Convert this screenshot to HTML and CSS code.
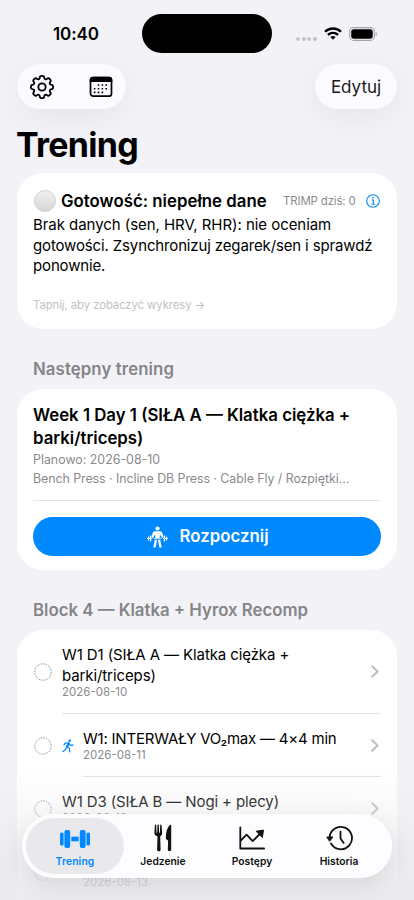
FILE: index.html
```html
<!DOCTYPE html>
<html lang="pl">
<head>
<meta charset="utf-8">
<meta name="viewport" content="width=device-width, initial-scale=1">
<title>Trening</title>
<link rel="stylesheet" href="styles.css">
</head>
<body>
<div class="screen">
  <header class="status">
    <span class="clock">10:40</span>
    <span class="island"></span>
    <span class="indicators">
      <span class="dots"><i></i><i></i><i></i><i></i></span>
      <svg class="wifi" width="18" height="13" viewBox="0 0 18 13" fill="none" stroke="#000" stroke-width="2.3"><path d="M1 4.8a11.3 11.3 0 0 1 16 0"/><path d="M3.9 7.9a7.2 7.2 0 0 1 10.2 0"/><path d="M9 12.8 6.4 10.1a3.8 3.8 0 0 1 5.2 0z" fill="#000" stroke="none"/></svg>
      <svg class="battery" width="28" height="14" viewBox="0 0 28 14"><rect x=".6" y=".6" width="24.8" height="12.8" rx="4.2" fill="none" stroke="#a5a5a8" stroke-width="1.1"/><rect x="2.2" y="2.2" width="21.6" height="9.6" rx="2.8"/><path d="M26.7 4.8c1.5.6 1.5 3.8 0 4.4z" fill="#a5a5a8"/></svg>
    </span>
  </header>

  <nav class="toolbar">
    <div class="pill tools">
      <svg width="26" height="26" viewBox="-13 -13 26 26" fill="none" stroke="#000" stroke-width="1.9" stroke-linecap="round">
        <defs><path id="teeth" d="M-3.38-8.15Q-2.23-8.62-2.24-10.1Q-2.25-11.58 0-11.58Q2.25-11.58 2.24-10.1Q2.23-8.62 3.38-8.15Q4.52-7.67 5.56-8.73Q6.6-9.78 8.19-8.19Q9.78-6.6 8.73-5.56Q7.67-4.52 8.15-3.38"/></defs>
        <g transform="scale(.96)"><use href="#teeth"/><use href="#teeth" transform="rotate(90)"/><use href="#teeth" transform="rotate(180)"/><use href="#teeth" transform="rotate(270)"/><circle r="3.8"/></g>
      </svg>
      <svg width="24" height="22" viewBox="0 0 24 22"><rect x="1.5" y="1.5" width="21" height="18.700" rx="2.800" fill="none" stroke="#000" stroke-width="1.700"/><path d="M.7 6V3.900A3.200 3.200 0 0 1 3.900.7h16.200a3.200 3.200 0 0 1 3.200 3.200V6z"/><g stroke="#000" stroke-width="1.600" stroke-dasharray="1.600 2.250"><path d="M8.700 9h9.800M4.850 12.700h13.600M4.850 16.400h9.500"/></g></svg>
    </div>
    <div class="pill edit"><span>Edytuj</span></div>
  </nav>

  <h1>Trening</h1>

  <main>
    <section class="card ready">
      <div class="ready-head">
        <span class="orb"></span>
        <h2>Gotowość: niepełne dane</h2>
        <span class="trimp">TRIMP dziś: 0</span>
        <svg width="14" height="14" viewBox="0 0 14 14" fill="none" stroke="#0088ff"><circle cx="7" cy="7" r="6.300" stroke-width="1.100"/><path d="M5.600 6h1.700v4M5.400 10.200h3.500" stroke-width="1.100"/><circle cx="7" cy="3.800" r=".9" fill="#0088ff" stroke="none"/></svg>
      </div>
      <p class="body-text"><span class="l1">Brak danych (sen, HRV, RHR): nie oceniam</span><br><span class="l2">gotowości. Zsynchronizuj zegarek/sen i sprawdź</span><br><span class="l3">ponownie.</span></p>
      <p class="hint">Tapnij, aby zobaczyć wykresy →</p>
    </section>

    <h3 class="next-label">Następny trening</h3>
    <section class="card next">
      <h2>Week 1 Day 1 (SIŁA A — Klatka ciężka +<br>barki/triceps)</h2>
      <p class="planned">Planowo: 2026-08-10</p>
      <p class="exercises">Bench Press · Incline DB Press · Cable Fly / Rozpiętki…</p>
      <hr>
      <div class="start">
        <svg width="21" height="22" viewBox="0 0 21 22" fill="#fff"><circle cx="10.500" cy="2.500" r="2.100"/><path d="M8 5.300h5c1.300 0 2 .7 2.400 1.900l1.200 4-1.500.7-2.100-3.300-.3 3.500H8.300L8 8.600l-2.100 3.300-1.500-.7 1.200-4C6 6 6.700 5.300 8 5.300z"/><path d="M7.800 13.700h2.300L8.600 21.500H6.300zM10.900 13.700h2.300l1.500 7.800h-2.300z"/><path d="M0 12h4.800v1H0zM16.200 12H21v1h-4.800zM6.500 12.200h8v.7h-8z"/><path d="M1 10.500h1.100v4H1zM2.900 9.500h1.300v6H2.900zM16.800 9.500h1.300v6h-1.300zM18.900 10.500H20v4h-1.100z"/></svg>
        <span>Rozpocznij</span>
      </div>
    </section>

    <h3 class="block-label">Block 4 — Klatka + Hyrox Recomp</h3>
    <section class="card list">
      <article class="row tall">
        <svg class="ring" width="18" height="18" viewBox="0 0 18 18"><circle cx="9" cy="9" r="8.200"/></svg>
        <div class="cell"><div class="text"><p class="title r1">W1 D1 (SIŁA A — Klatka ciężka +<br>barki/triceps)</p><p class="date">2026-08-10</p></div>
        <svg class="chev" width="8" height="13" viewBox="0 0 8 13"><path d="M1.200 1.200 6.600 6.500 1.200 11.800"/></svg></div>
      </article>
      <article class="row">
        <svg class="ring" width="18" height="18" viewBox="0 0 18 18"><circle cx="9" cy="9" r="8.200"/></svg>
        <svg class="runner" width="12" height="14" viewBox="0 0 12 14" fill="none" stroke="#0088ff" stroke-linecap="round" stroke-linejoin="round"><circle cx="7.700" cy="1.700" r="1.300" fill="#0088ff" stroke="none"/><path d="M6.600 4.300 4.900 8" stroke-width="2.300"/><path d="M6 4 3.200 4.100 1.900 6.200M7.200 4.700l1.300 1.700 2.500-.3M5.500 7.900l2 1.700.2 3.200M4.400 8.500 3.500 10.700.8 12.500" stroke-width="1.200"/></svg>
        <div class="cell"><div class="text"><p class="title r2">W1: INTERWAŁY VO₂max — 4×4 min</p><p class="date">2026-08-11</p></div>
        <svg class="chev" width="8" height="13" viewBox="0 0 8 13"><path d="M1.200 1.200 6.600 6.500 1.200 11.800"/></svg></div>
      </article>
      <article class="row">
        <svg class="ring" width="18" height="18" viewBox="0 0 18 18"><circle cx="9" cy="9" r="8.200"/></svg>
        <div class="cell"><div class="text"><p class="title r3">W1 D3 (SIŁA B — Nogi + plecy)</p><p class="date">2026-08-12</p></div>
        <svg class="chev" width="8" height="13" viewBox="0 0 8 13"><path d="M1.200 1.200 6.600 6.500 1.200 11.800"/></svg></div>
      </article>
      <article class="row last">
        <svg class="ring" width="18" height="18" viewBox="0 0 18 18"><circle cx="9" cy="9" r="8.200"/></svg>
        <div class="cell"><div class="text"><p class="date">2026-08-13</p></div></div>
      </article>
    </section>
  </main>

  <div class="fade"></div>
  <nav class="tabs">
    <div class="tab active">
      <svg width="32" height="20" viewBox="0 0 32 20" fill="#0088ff"><rect x="1" y="3.500" width="3.600" height="13" rx="1.500"/><rect x="5.400" y="1" width="5.800" height="18" rx="2"/><rect x="12.300" y="7.700" width="7.400" height="4.600"/><rect x="20.800" y="1" width="5.800" height="18" rx="2"/><rect x="27.400" y="3.500" width="3.600" height="13" rx="1.500"/></svg>
      <span>Trening</span>
    </div>
    <div class="tab food">
      <svg width="18" height="28" viewBox="0 0 18 28" fill="#111"><path d="M.9 1.200c0-.8 1.300-.8 1.300 0l.3 7.200c0 .5.700.5.700 0l.3-7.400c0-.8 1.400-.8 1.400 0l.2 7.400c0 .5.800.5.800 0l.3-7.200c0-.8 1.300-.8 1.400 0l.5 7.600c.1 1.900-.7 2.800-1.900 3.500l.4 13.400c0 2-3.500 2-3.500 0l.4-13.400C1.200 11.600.3 10.700.4 8.800z"/><path d="M17.200 1.600v24.200c0 1.900-3.400 1.900-3.400 0l.3-8.600c0-.6-.3-.9-.8-1.200-1.100-.6-1.600-1.300-1.500-2.600.2-5 1.100-9.200 3.700-12.100.7-.7 1.700-.6 1.700.3z"/></svg>
      <span>Jedzenie</span>
    </div>
    <div class="tab progress">
      <svg width="26" height="24" viewBox="0 0 26 24" fill="none" stroke="#111" stroke-width="1.800" stroke-linecap="round" stroke-linejoin="round"><path d="M1.300 1.500v21h23.900"/><path d="m1.800 14.500 5.800-5.800 6.100 6.500 8-8.200"/><path d="m17.500 5.200 7-1.100-1.100 7.100z" fill="#111" stroke-width="1"/></svg>
      <span>Postępy</span>
    </div>
    <div class="tab">
      <svg width="27" height="25" viewBox="0 0 27 25" fill="none" stroke="#111" stroke-width="1.800" stroke-linecap="round" stroke-linejoin="round"><path d="M3.600 12.500A11.200 11.200 0 1 1 5 18"/><path d="M14.500 6.200v6.700l3.200 4.500"/><path d="M1.100 11.500h5.800L3.800 15.500z" fill="#111" stroke-width="1"/></svg>
      <span>Historia</span>
    </div>
  </nav>
</div>
</body>
</html>
```
FILE: styles.css
```css
* { box-sizing: border-box; }
body { margin: 0; background: #f2f2f7; color: #000; font-family: Inter, "Liberation Sans", sans-serif; }
h1, h2, h3, p, hr { margin: 0; }
svg { display: block; flex: none; }
span { white-space: nowrap; }
.screen { position: relative; width: 414px; height: 900px; overflow: hidden; background: #f2f2f7; }

.status { display: flex; height: 64px; padding: 14px 0 0 53px; align-items: flex-start; }
.clock { width: 89px; font-size: 17px; font-weight: 600; line-height: 40px; letter-spacing: -.1px; }
.island { width: 130px; height: 39px; border-radius: 20px; background: #000; }
.indicators { display: flex; padding: 13px 0 0 24px; align-items: flex-start; }
.dots { display: flex; gap: 1.700px; padding-top: 9.500px; }
.dots i { width: 4px; height: 4px; border-radius: 50%; background: #c3c3c8; }
.wifi { margin-left: 6.500px; }
.battery { margin-left: 7.500px; }

.toolbar { display: flex; justify-content: space-between; padding: 0 17px; }
.pill { display: flex; align-items: center; height: 45px; border-radius: 23px; background: #fafaff; box-shadow: 0 8px 32px rgba(0, 0, 0, .06); }
.tools { width: 109px; padding: 1px 13px 0 12px; justify-content: space-between; }
.edit { width: 82px; justify-content: center; font-size: 17px; color: #1a1a1a; }
h1 { padding-left: 16px; height: 64px; font-size: 34px; font-weight: 700; line-height: 72px; letter-spacing: -.730px; }

main { padding: 0 17px; }
.card { border-radius: 26px; background: #fff; padding: 0 16px; }
h2 { font-weight: 600; white-space: nowrap; }
.ready { height: 156px; padding-top: 16px; }
.ready-head { display: flex; align-items: center; height: 24px; }
.orb { width: 22px; height: 22px; margin-left: .5px; border-radius: 50%; border: 1px solid #d0d0d0; background: linear-gradient(#f0f0f0, #d6d6d6); }
.ready h2 { margin-left: 5.500px; width: 222px; font-size: 16.800px; letter-spacing: .020px; }
.trimp { width: 83px; font-size: 11.400px; letter-spacing: -.120px; color: #8a8a8e; }
.body-text { font-size: 15px; line-height: 20.700px; white-space: nowrap; margin-top: 2px; }
.l1 { letter-spacing: -.050px; }
.l2 { letter-spacing: -.140px; }
.l3 { letter-spacing: -.150px; }
.hint { margin-top: 20px; font-size: 11.300px; line-height: 16px; letter-spacing: -.060px; color: #c1c1c4; }
h3 { padding-left: 16px; font-size: 16.800px; font-weight: 600; color: #858589; height: 60px; line-height: 80px; white-space: nowrap; }
.next-label { letter-spacing: .100px; }
.next { height: 181px; padding-top: 15px; }
.next h2 { font-size: 16.800px; line-height: 23px; }
.planned, .exercises { font-size: 12.400px; line-height: 19px; color: #8a8a8e; white-space: nowrap; }
.exercises { letter-spacing: -.060px; }
hr { height: 1px; border: 0; background: #e4e4e6; margin-top: 12px; }
.start { display: flex; align-items: center; justify-content: center; gap: 11px; height: 39px; margin-top: 16px; padding-left: 2px; border-radius: 20px; background: #08f; color: #fff; font-size: 16.800px; font-weight: 600; }
.start span { letter-spacing: .030px; line-height: 38px; padding-bottom: 1px; }
.list { height: 300px; border-radius: 26px 26px 0 0; }
.row { display: flex; align-items: center; height: 63px; }
.row.tall { height: 84px; }
.ring { margin-left: 1px; fill: none; stroke: #77777b; stroke-width: 1; stroke-dasharray: 1.200 1.376; }
.runner { margin-left: 10px; }
.cell { display: flex; align-items: center; flex: 1; height: 100%; margin-left: 10px; border-bottom: 1px solid #e4e4e6; }
.runner + .cell { margin-left: 9px; }
.text { flex: 1; }
.title { font-size: 15px; line-height: 20.500px; white-space: nowrap; }
.r1 { letter-spacing: -.100px; }
.r2 { letter-spacing: -.215px; }
.r3 { letter-spacing: -.120px; }
.date { font-size: 11.500px; line-height: 12px; color: #8a8a8e; }
.chev { margin-right: 2px; fill: none; stroke: #bebec2; stroke-width: 2; stroke-linecap: round; stroke-linejoin: round; }
.last .cell { margin-left: 31px; border: 0; }
.last .date { padding-top: 20px; }

.fade { position: absolute; left: 0; right: 0; bottom: 0; height: 132px; background: linear-gradient(rgba(235, 235, 239, 0), rgba(233, 233, 237, .85)); }
.tabs { position: absolute; left: 22px; top: 814px; display: flex; width: 370px; height: 64px; padding: 4px; border-radius: 32px; background: rgba(253, 253, 255, .98); box-shadow: 0 8px 28px rgba(0, 0, 0, .1); }
.tab { display: flex; flex-direction: column; align-items: center; width: 88px; height: 56px; border-radius: 28px; color: #111; font-size: 10.300px; font-weight: 600; }
.tab svg { height: 28px; margin-top: 6px; }
.tab.active svg { margin-top: 7px; margin-bottom: -1px; }
.tab span { line-height: 16px; margin-top: 1px; }
.tab.active { width: 98px; background: #e9e9ec; color: #08f; }
.tab.active span { letter-spacing: .150px; }
.food { margin-left: -5px; }
.progress { margin-left: 1px; margin-right: -1px; }
```
